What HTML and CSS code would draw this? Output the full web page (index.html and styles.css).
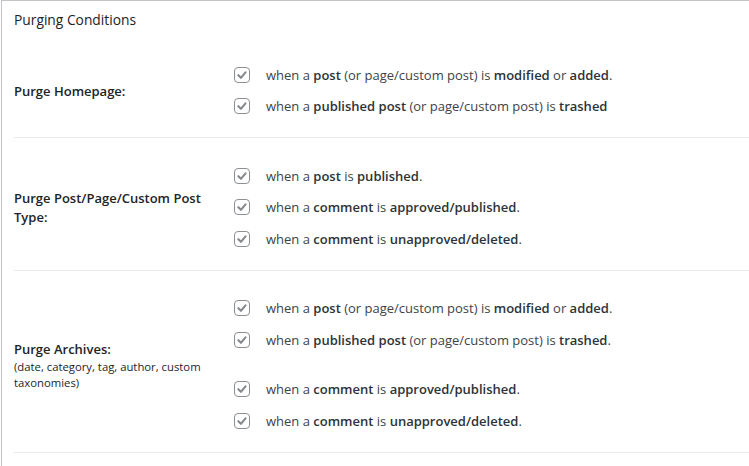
FILE: index.html
```html
<!DOCTYPE html>
<html>
<head>
<meta charset="utf-8">
<link rel="stylesheet" href="styles.css">
</head>
<body>
<div class="panel">
  <div class="title">Purging Conditions</div>

  <div class="row">
    <div class="label"><div class="name">Purge Homepage:</div></div>
    <div class="opts">
      <div class="opt"><span class="cb"><svg viewBox="0 0 16 16"><path d="M3.8 8.2l3 3 5.2-6.2"/></svg></span><span>when a <b>post</b> (or page/custom post) is <b>modified</b> or <b>added</b>.</span></div>
      <div class="opt"><span class="cb"><svg viewBox="0 0 16 16"><path d="M3.8 8.2l3 3 5.2-6.2"/></svg></span><span>when a <b>published post</b> (or page/custom post) is <b>trashed</b></span></div>
    </div>
  </div>

  <div class="row">
    <div class="label"><div class="name">Purge Post/Page/Custom Post Type:</div></div>
    <div class="opts">
      <div class="opt"><span class="cb"><svg viewBox="0 0 16 16"><path d="M3.8 8.2l3 3 5.2-6.2"/></svg></span><span>when a <b>post</b> is <b>published</b>.</span></div>
      <div class="opt"><span class="cb"><svg viewBox="0 0 16 16"><path d="M3.8 8.2l3 3 5.2-6.2"/></svg></span><span>when a <b>comment</b> is <b>approved/published</b>.</span></div>
      <div class="opt"><span class="cb"><svg viewBox="0 0 16 16"><path d="M3.8 8.2l3 3 5.2-6.2"/></svg></span><span>when a <b>comment</b> is <b>unapproved/deleted</b>.</span></div>
    </div>
  </div>

  <div class="row">
    <div class="label">
      <div class="name">Purge Archives:</div>
      <div class="sub">(date, category, tag, author, custom taxonomies)</div>
    </div>
    <div class="opts">
      <div class="opt"><span class="cb"><svg viewBox="0 0 16 16"><path d="M3.8 8.2l3 3 5.2-6.2"/></svg></span><span>when a <b>post</b> (or page/custom post) is <b>modified</b> or <b>added</b>.</span></div>
      <div class="opt"><span class="cb"><svg viewBox="0 0 16 16"><path d="M3.8 8.2l3 3 5.2-6.2"/></svg></span><span>when a <b>published post</b> (or page/custom post) is <b>trashed</b>.</span></div>
      <div class="opt gap"><span class="cb"><svg viewBox="0 0 16 16"><path d="M3.8 8.2l3 3 5.2-6.2"/></svg></span><span>when a <b>comment</b> is <b>approved/published</b>.</span></div>
      <div class="opt"><span class="cb"><svg viewBox="0 0 16 16"><path d="M3.8 8.2l3 3 5.2-6.2"/></svg></span><span>when a <b>comment</b> is <b>unapproved/deleted</b>.</span></div>
    </div>
  </div>
</div>
</body>
</html>
```

FILE: styles.css
```css
html, body {
  margin: 0;
  padding: 0;
  background: #ffffff;
}
body {
  font-family: "Open Sans", "Noto Sans", sans-serif;
  font-size: 13px;
  color: #1d2327;
}
.panel {
  margin-left: 1px;
  border-left: 1px solid #c3c4c7;
  border-top: 1px solid #c3c4c7;
  height: 466px;
  box-sizing: border-box;
}
.title {
  height: 36px;
  padding: 10px 0 0 12px;
  box-sizing: border-box;
  line-height: 18px;
  font-size: 13.8px;
  color: #1d2327;
}
.row {
  display: flex;
  margin-left: 12px;
  border-bottom: 1px solid #ebebeb;
  padding: 22px 0 15px 0;
}
.label {
  width: 220px;
  flex: none;
  display: flex;
  flex-direction: column;
  justify-content: center;
  padding-top: 2px;
  box-sizing: border-box;
}
.name {
  font-weight: 600;
  line-height: 19px;
  width: 200px;
}
.sub {
  font-size: 11.3px;
  line-height: 16px;
  width: 200px;
}
.opts {
  display: flex;
  flex-direction: column;
}
.opt {
  height: 31.5px;
  display: flex;
  align-items: center;
  color: #3c434a;
}
.opt.gap {
  margin-top: 18px;
}
.opt b {
  font-weight: 600;
  color: #2c3338;
}
.cb {
  width: 16px;
  height: 16px;
  box-sizing: border-box;
  border: 1px solid #8c8f94;
  border-radius: 4px;
  margin-right: 16px;
  flex: none;
  display: flex;
}
.cb svg {
  width: 14px;
  height: 14px;
}
.cb path {
  fill: none;
  stroke: #85888d;
  stroke-width: 2.4;
  stroke-linecap: round;
  stroke-linejoin: round;
}
```
